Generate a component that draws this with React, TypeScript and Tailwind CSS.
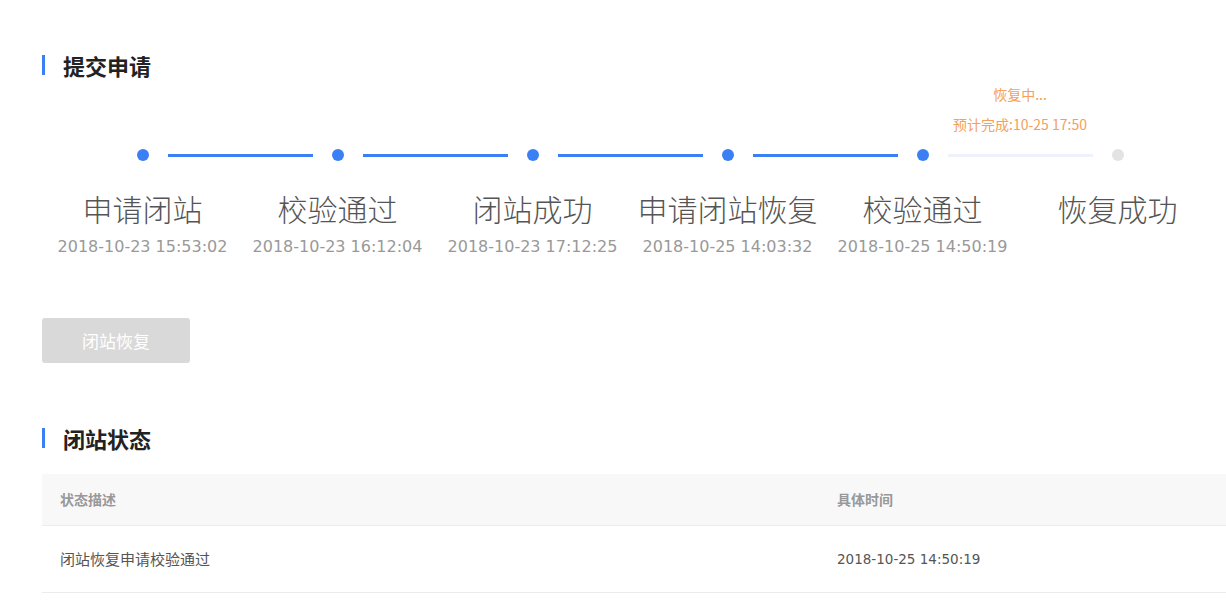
const steps = [
  { label: "申请闭站", time: "2018-10-23 15:53:02", done: true },
  { label: "校验通过", time: "2018-10-23 16:12:04", done: true },
  { label: "闭站成功", time: "2018-10-23 17:12:25", done: true },
  { label: "申请闭站恢复", time: "2018-10-25 14:03:32", done: true },
  { label: "校验通过", time: "2018-10-25 14:50:19", done: true },
  { label: "恢复成功", time: "", done: false },
];

const font = { fontFamily: '"DejaVu Sans", "Noto Sans CJK SC", sans-serif' };
const cjk = { fontFamily: '"Noto Sans CJK SC", sans-serif' };

function SectionTitle({ children }: { children: string }) {
  return (
    <div className="flex items-center gap-[18px]">
      <span className="h-[20px] w-[3px] bg-[#3b7ff5]" />
      <h2 className="text-[22px] font-bold leading-[30px] text-[#222]" style={cjk}>
        {children}
      </h2>
    </div>
  );
}

export default function App() {
  return (
    <div className="min-h-[606px] w-[1226px] overflow-hidden bg-white pl-[42px] pt-[50px]" style={font}>
      <SectionTitle>提交申请</SectionTitle>

      <div className="ml-[3px] mt-[4px] w-[1170px]">
        <div className="grid grid-cols-6">
          <div className="col-span-4" />
          <div className="col-span-2 flex flex-col items-center gap-[10px] text-[14px] text-[#f5a05a]" style={cjk}>
            <span className="leading-[20px]">恢复中...</span>
            <span className="leading-[20px]">预计完成:10-25 17:50</span>
          </div>
        </div>
        <div className="mt-[9px] grid grid-cols-6">
          {steps.map((s, i) => (
            <div key={i} className="flex flex-col items-center">
              <div className="relative flex h-[24px] w-full items-center justify-center">
                <span className={`h-[12px] w-[12px] rounded-full ${s.done ? "bg-[#3b7ff5]" : "bg-[#e3e3e3]"}`} />
                {i < steps.length - 1 && (
                  <span
                    className={`absolute left-[calc(50%+25px)] top-[11px] h-[3px] w-[145px] ${
                      i === 4 ? "bg-[#edf2fb]" : "bg-[#3b7ff5]"
                    }`}
                  />
                )}
              </div>
              <div className="mt-[21px] text-[30px] leading-[40px] text-[#555]" style={{ ...cjk, fontWeight: 300 }}>
                {s.label}
              </div>
              <div className="mt-[9px] h-[20px] text-[16px] leading-[20px] text-[#999]">{s.time}</div>
            </div>
          ))}
        </div>
      </div>

      <button
        disabled
        className="mt-[61px] h-[45px] w-[148px] rounded-[3px] bg-[#d9d9d9] text-[17px] text-white"
        style={cjk}
      >
        闭站恢复
      </button>

      <div className="mt-[60px]">
        <SectionTitle>闭站状态</SectionTitle>
      </div>

      <div className="mt-[21px] w-[1200px]" style={cjk}>
        <div className="grid h-[52px] grid-cols-[777px_1fr] items-center border-b border-[#ececec] bg-[#f8f8f8] px-[18px] text-[14px] font-bold text-[#999]">
          <span>状态描述</span>
          <span>具体时间</span>
        </div>
        <div className="grid h-[67px] grid-cols-[777px_1fr] items-center border-b border-[#ececec] px-[18px] text-[15px] text-[#555]">
          <span>闭站恢复申请校验通过</span>
          <span className="text-[13.5px]" style={font}>2018-10-25 14:50:19</span>
        </div>
      </div>
    </div>
  );
}
